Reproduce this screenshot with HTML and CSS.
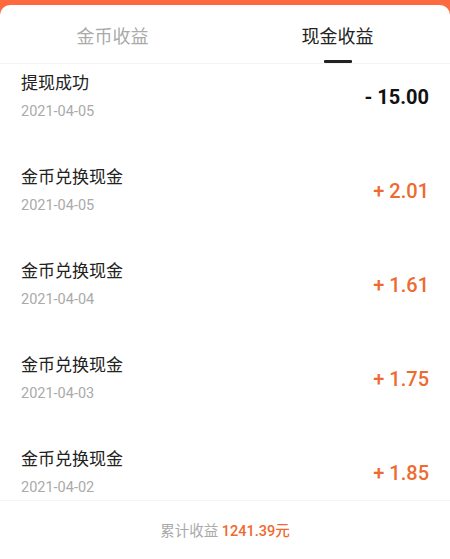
FILE: index.html
```html
<!DOCTYPE html>
<html lang="zh-CN">
<head>
    <meta charset="UTF-8">
    <meta name="viewport" content="width=device-width, initial-scale=1.0">
    <title>收益明细</title>
    <link rel="stylesheet" href="styles.css">
</head>
<body>

    <div class="panel">
        <!-- 标签页 -->
        <div class="tabs">
            <div class="tab">金币收益</div>
            <div class="tab active">现金收益</div>
        </div>

        <!-- 收益列表 -->
        <div class="record-list">
            <div class="record">
                <div class="record-info">
                    <div class="record-title">提现成功</div>
                    <div class="record-date">2021-04-05</div>
                </div>
                <div class="record-amount minus">- 15.00</div>
            </div>
            <div class="record">
                <div class="record-info">
                    <div class="record-title">金币兑换现金</div>
                    <div class="record-date">2021-04-05</div>
                </div>
                <div class="record-amount plus">+ 2.01</div>
            </div>
            <div class="record">
                <div class="record-info">
                    <div class="record-title">金币兑换现金</div>
                    <div class="record-date">2021-04-04</div>
                </div>
                <div class="record-amount plus">+ 1.61</div>
            </div>
            <div class="record">
                <div class="record-info">
                    <div class="record-title">金币兑换现金</div>
                    <div class="record-date">2021-04-03</div>
                </div>
                <div class="record-amount plus">+ 1.75</div>
            </div>
            <div class="record">
                <div class="record-info">
                    <div class="record-title">金币兑换现金</div>
                    <div class="record-date">2021-04-02</div>
                </div>
                <div class="record-amount plus">+ 1.85</div>
            </div>
        </div>

        <!-- 累计收益 -->
        <div class="total">
            累计收益 <span class="total-value">1241.39元</span>
        </div>
    </div>

</body>
</html>
```

FILE: styles.css
```css
html, body {
    margin: 0;
    height: 100%;
}

body {
    background-color: #fd6a3f;
    font-family: Roboto, "Noto Sans CJK SC", sans-serif;
    padding-top: 5px;
    box-sizing: border-box;
}

.panel {
    height: 100%;
    background-color: #fff;
    border-radius: 10px 10px 0 0;
    display: flex;
    flex-direction: column;
}

/* 标签页 */
.tabs {
    display: flex;
    height: 59px;
    border-bottom: 1px solid #f3f3f3;
    box-sizing: border-box;
}

.tab {
    flex: 1;
    text-align: center;
    font-size: 18px;
    line-height: 22px;
    padding-top: 21px;
    color: #aaa;
    position: relative;
}

.tab.active {
    color: #222;
}

.tab.active::after {
    content: "";
    position: absolute;
    left: 50%;
    bottom: 0;
    width: 28px;
    height: 3px;
    margin-left: -14px;
    background-color: #222;
    border-radius: 1px;
}

/* 收益列表 */
.record-list {
    flex: 1;
    overflow: hidden;
    border-bottom: 1px solid #f5f5f5;
}

.record {
    height: 94px;
    padding: 8px 21px 0 21px;
    box-sizing: border-box;
    display: flex;
    justify-content: space-between;
    align-items: flex-start;
}

.record-title {
    font-size: 17px;
    line-height: 22px;
    color: #222;
}

.record-date {
    margin-top: 8px;
    font-size: 14.5px;
    line-height: 20px;
    color: #aaa;
}

.record-amount {
    margin-top: 13px;
    font-size: 20px;
    line-height: 24px;
}

.record-amount.minus {
    color: #111;
    font-weight: bold;
}

.record-amount.plus {
    color: #ee6a2f;
    font-weight: 500;
}

/* 累计收益 */
.total {
    height: 58px;
    line-height: 62px;
    text-align: center;
    font-size: 14.5px;
    color: #aaa;
}

.total-value {
    color: #ee6a2f;
    font-weight: 500;
}
```
